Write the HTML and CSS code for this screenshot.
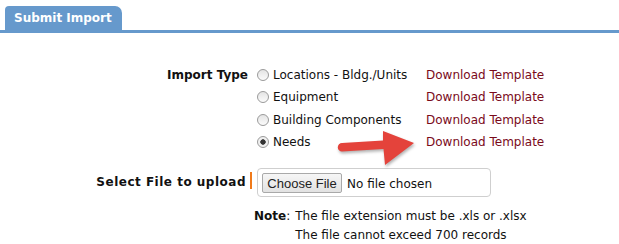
FILE: index.html
```html
<!DOCTYPE html>
<html lang="en">
<head>
    <meta charset="UTF-8">
    <meta name="viewport" content="width=device-width, initial-scale=1.0">
    <title>Submit Import</title>
    <link rel="stylesheet" href="styles.css">
</head>
<body>
    <div class="tabs">
        <span class="tab">Submit Import</span>
    </div>

    <form class="import" action="#" method="post">
        <div class="label">Import Type</div>
        <div class="types">
            <label class="opt"><input type="radio" name="import_type" value="locations"> Locations - Bldg./Units</label>
            <a href="#" class="dl">Download Template</a>
            <label class="opt"><input type="radio" name="import_type" value="equipment"> Equipment</label>
            <a href="#" class="dl">Download Template</a>
            <label class="opt"><input type="radio" name="import_type" value="components"> Building Components</label>
            <a href="#" class="dl">Download Template</a>
            <label class="opt"><input type="radio" name="import_type" value="needs" checked> Needs</label>
            <a href="#" class="dl">Download Template</a>
        </div>

        <div class="label req">Select File to upload</div>
        <div class="file">
            <input type="file" name="upload">
        </div>

        <div></div>
        <div class="note">
            <span><b>Note</b>:</span>
            <div class="note-text">
                The file extension must be .xls or .xlsx<br>
                The file cannot exceed 700 records
            </div>
        </div>

        <!-- callout arrow pointing at the Needs template -->
        <svg class="arrow" width="95" height="52" viewBox="0 0 95 52">
            <path d="M12 21 L53 18.5 L53 9 L84 21 L55 43 L53.5 27 L12 29.5 A4.2 4.2 0 0 1 12 21 Z" fill="#e4433b"/>
        </svg>
    </form>
</body>
</html>
```

FILE: styles.css
```css
body {
    margin: 0;
    font-family: "DejaVu Sans", Verdana, sans-serif;
    font-size: 12px;
    color: #111;
    background: #fff;
}

.tabs {
    margin-top: 6px;
    padding-left: 5px;
    border-bottom: 3px solid #6699cc;
    height: 24px;
}

.tab {
    display: inline-block;
    height: 24px;
    line-height: 25px;
    padding: 0 10px 0 9px;
    background: #6699cc;
    color: #fff;
    font-weight: bold;
    font-size: 12px;
    border-radius: 4px 7px 0 0;
}

.import {
    position: relative;
    display: grid;
    grid-template-columns: 248px auto;
    column-gap: 6px;
    padding-top: 31px;
}

.label {
    text-align: right;
    font-weight: bold;
    line-height: 22px;
}

.label.req {
    margin-top: 15px;
    line-height: 29px;
    letter-spacing: 0.5px;
}

.label.req::after {
    content: "";
    display: inline-block;
    width: 2px;
    height: 17px;
    margin-left: 4px;
    margin-right: -4px;
    vertical-align: -3px;
    background: #f07a1a;
}

.types {
    display: grid;
    grid-template-columns: 165px 1fr;
    grid-auto-rows: 22.3px;
    column-gap: 4px;
    align-items: center;
    padding-left: 3px;
}

.opt {
    display: flex;
    align-items: center;
    gap: 4px;
    white-space: nowrap;
}

.opt input {
    appearance: none;
    -webkit-appearance: none;
    width: 12px;
    height: 12px;
    margin: 0;
    border: 1px solid #9a9a9a;
    border-radius: 50%;
    background: linear-gradient(#e4e4e4, #fbfbfb);
}

.opt input:checked {
    background: radial-gradient(circle, #333 0 2.4px, #eee 3px, #f6f6f6);
}

.dl {
    color: #7a0a1a;
    text-decoration: none;
}

.file {
    margin-top: 15px;
    margin-left: 3px;
    width: 224px;
    height: 19px;
    padding: 4px 4px;
    border: 1px solid #cfcfcf;
    border-radius: 4px;
}

.file input {
    font-family: "DejaVu Sans", Verdana, sans-serif;
    font-size: 12px;
    color: #111;
    width: 224px;
}

.file input::file-selector-button {
    font-family: "Liberation Sans", Arial, sans-serif;
    font-size: 13px;
    width: 80px;
    height: 20px;
    padding: 0;
    margin: 0 5px 0 0;
    border: 1px solid #a9a9a9;
    border-radius: 2px;
    background: linear-gradient(#f6f6f6, #e2e2e2);
    color: #222;
}

.note {
    display: flex;
    gap: 5px;
    margin-top: 10px;
    line-height: 19px;
}

.arrow {
    position: absolute;
    left: 330px;
    top: 89px;
    filter: drop-shadow(1px 2px 1.5px rgba(0, 0, 0, 0.3));
}
```
